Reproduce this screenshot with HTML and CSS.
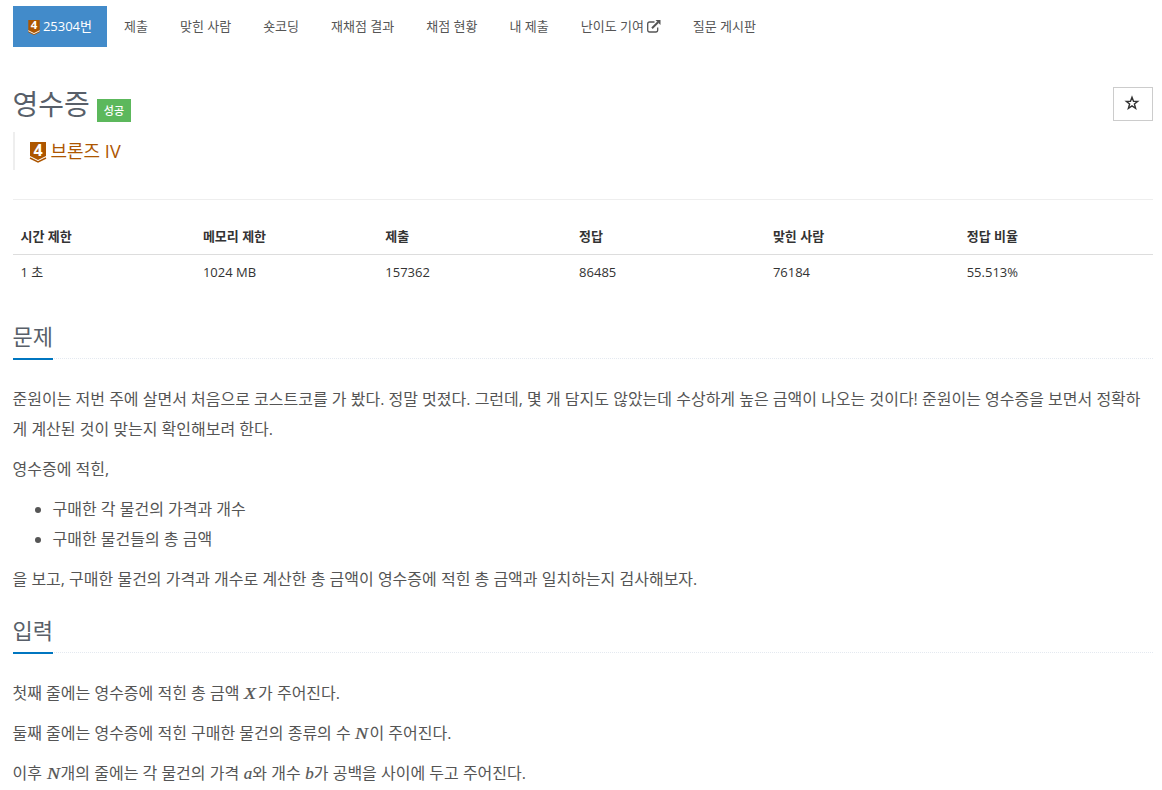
FILE: index.html
```html
<!DOCTYPE html>
<html lang="ko">
<head>
  <meta charset="UTF-8" />
  <meta name="viewport" content="width=device-width, initial-scale=1.0"/>
  <title>25304번: 영수증</title>
  <link rel="stylesheet" href="styles.css">
</head>
<body>
  <div class="container">
    <ul class="problem-menu">
      <li class="active"><a href="#"><svg class="tier-small" viewBox="0 0 16 21"><path fill="#ad5600" d="M0 0h16v17l-8 4-8-4z"/><path fill="none" stroke="#fff" stroke-width="1.3" d="M0 15l8 4 8-4"/><text x="8" y="13" text-anchor="middle">4</text></svg> 25304번</a></li>
      <li><a href="#">제출</a></li>
      <li><a href="#">맞힌 사람</a></li>
      <li><a href="#">숏코딩</a></li>
      <li><a href="#">재채점 결과</a></li>
      <li><a href="#">채점 현황</a></li>
      <li><a href="#">내 제출</a></li>
      <li><a href="#">난이도 기여 <svg class="external" viewBox="0 0 14 13"><path fill="none" stroke="#555" stroke-width="1.3" d="M7.500 2H2.600Q.7 2 .7 3.900v6.200Q.7 12 2.600 12h6.200q1.900 0 1.900-1.900V7.500"/><path fill="none" stroke="#555" stroke-width="2" d="M5 8.300l6-6"/><path fill="#555" d="M8.500 0H13.500v5z"/></svg></a></li>
      <li><a href="#">질문 게시판</a></li>
    </ul>

    <div class="page-header">
      <div class="title-row">
        <h1>영수증</h1>
        <span class="label">성공</span>
        <button class="btn-star" type="button" aria-label="즐겨찾기">
          <svg viewBox="0 0 14 14"><path d="M7 1.200l1.500 4 4.200.2-3.300 2.600 1.200 4.300L7 9.900l-3.600 2.400 1.200-4.300L1.300 5.400l4.200-.2z"/></svg>
        </button>
      </div>
      <blockquote>
        <svg class="tier" viewBox="0 0 16 21"><path fill="#ad5600" d="M0 0h16v14l-8 4-8-4z"/><path fill="none" stroke="#ad5600" stroke-width="1.400" d="M0 16l8 4 8-4"/><text x="8" y="13.500" text-anchor="middle">4</text></svg>
        <span>브론즈 IV</span>
      </blockquote>
    </div>

    <table class="info">
      <thead>
        <tr>
          <th class="narrow">시간 제한</th>
          <th class="narrow">메모리 제한</th>
          <th>제출</th>
          <th>정답</th>
          <th>맞힌 사람</th>
          <th>정답 비율</th>
        </tr>
      </thead>
      <tbody>
        <tr>
          <td>1 초</td>
          <td>1024 MB</td>
          <td>157362</td>
          <td>86485</td>
          <td>76184</td>
          <td>55.513%</td>
        </tr>
      </tbody>
    </table>

    <section>
      <div class="headline"><h2>문제</h2></div>
      <div class="problem-text">
        <p>준원이는 저번 주에 살면서 처음으로 코스트코를 가 봤다. 정말 멋졌다. 그런데, 몇 개 담지도 않았는데 수상하게 높은 금액이 나오는 것이다! 준원이는 영수증을 보면서 정확하게 계산된 것이 맞는지 확인해보려 한다.</p>
        <p>영수증에 적힌,</p>
        <ul>
          <li>구매한 각 물건의 가격과 개수</li>
          <li>구매한 물건들의 총 금액</li>
        </ul>
        <p>을 보고, 구매한 물건의 가격과 개수로 계산한 총 금액이 영수증에 적힌 총 금액과 일치하는지 검사해보자.</p>
      </div>
    </section>

    <section>
      <div class="headline"><h2>입력</h2></div>
      <div class="problem-text">
        <p>첫째 줄에는 영수증에 적힌 총 금액 <i class="wide">X</i>가 주어진다.</p>
        <p>둘째 줄에는 영수증에 적힌 구매한 물건의 종류의 수 <i class="wide">N</i>이 주어진다.</p>
        <p>이후 <i class="wide">N</i>개의 줄에는 각 물건의 가격 <i>a</i>와 개수 <i>b</i>가 공백을 사이에 두고 주어진다.</p>
      </div>
    </section>
  </div>
</body>
</html>
```
FILE: styles.css
```css
* {
  box-sizing: border-box;
}

body {
  margin: 0;
  background: #fff;
  color: #333;
  font-family: 'Open Sans', 'Noto Sans CJK KR', sans-serif;
  font-size: 13px;
  line-height: 21px;
}

.container {
  width: 1140px;
  margin-left: 12.5px;
  padding-top: 6px;
}

.problem-menu {
  display: flex;
  gap: 2px;
  height: 41px;
  margin: 0;
  padding: 0;
  list-style: none;
}

.problem-menu a {
  display: block;
  padding: 10px 15px;
  color: #555;
  text-decoration: none;
  white-space: nowrap;
}

.problem-menu .active a {
  background: #428bca;
  color: #fff;
}

svg {
  overflow: visible;
}

svg text {
  fill: #fff;
  font-family: 'Open Sans', sans-serif;
  font-size: 16px;
  font-weight: 700;
  line-height: 1;
}

.tier-small {
  width: 12px;
  height: 15px;
  vertical-align: -4px;
}

.external {
  width: 14px;
  height: 13px;
  margin-right: -0.5px;
  vertical-align: -2px;
}

.page-header {
  height: 113px;
  margin-top: 40px;
  border-bottom: 1px solid #eee;
}

.title-row {
  display: flex;
}

h1 {
  margin: 0;
  color: #585f69;
  font-size: 28px;
  font-weight: 400;
  line-height: 35px;
}

.label {
  height: 23px;
  margin: 12px 0 0 7px;
  padding: 0 7px;
  background: #5cb85c;
  color: #fff;
  font-size: 11px;
  font-weight: 500;
  line-height: 24px;
}

.btn-star {
  display: flex;
  align-items: center;
  justify-content: center;
  width: 40px;
  height: 34px;
  margin-left: auto;
  padding: 0 2px 2px 0;
  border: 1px solid #ccc;
  background: #fff;
}

.btn-star svg {
  width: 14px;
  height: 14px;
  fill: none;
  stroke: #333;
  stroke-width: 1.4;
}

blockquote {
  display: flex;
  align-items: center;
  gap: 5px;
  height: 38px;
  margin: 10px 0 0;
  padding-left: 15px;
  border-left: 2px solid #eee;
  color: #ad5600;
  font-size: 18px;
}

.tier {
  width: 16px;
  height: 21px;
  margin-top: 3px;
}

.info {
  width: 100%;
  margin-top: 19px;
  border-collapse: collapse;
  table-layout: fixed;
}

.info th,
.info td {
  width: 17%;
  padding: 7px 8px;
  text-align: left;
}

.info .narrow {
  width: 16%;
}

.info th {
  border-bottom: 1px solid #ddd;
}

.headline {
  height: 38px;
  margin: 21px 0 25px;
  border-bottom: 1px dotted #e4e9f0;
}

.info + section .headline {
  margin-top: 31px;
}

h2 {
  display: inline-block;
  height: 39px;
  margin: 0;
  border-bottom: 2px solid #0076c0;
  color: #585f69;
  font-size: 22px;
  font-weight: 400;
  line-height: 31px;
}

.problem-text {
  color: #555;
  font-size: 16px;
  line-height: 30px;
}

.problem-text p {
  margin: 0 0 10px;
}

.problem-text ul {
  margin: 0 0 10px;
  padding-left: 40px;
}

.problem-text i {
  margin-left: 0.5px;
  font-family: 'Liberation Serif', serif;
  font-size: 17px;
  line-height: 1;
  -webkit-text-stroke: 0.2px #555;
}

.problem-text .wide {
  display: inline-block;
  width: 14px;
  transform: scaleX(1.15);
  transform-origin: left;
}
```
